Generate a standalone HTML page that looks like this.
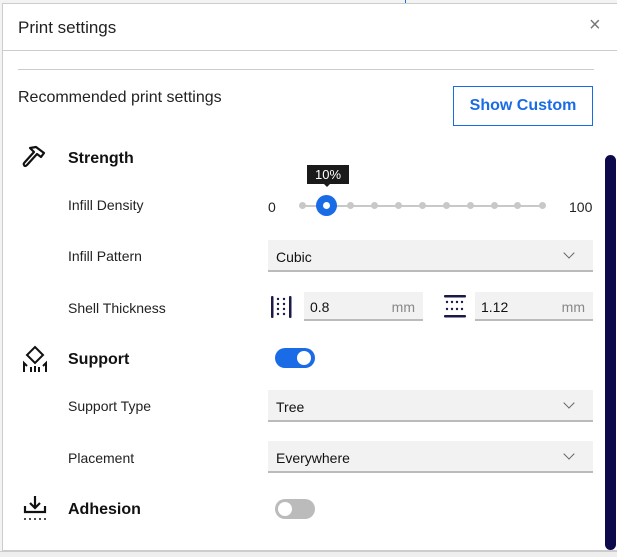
<!DOCTYPE html>
<html><head><meta charset="utf-8"><style>
*{box-sizing:border-box;margin:0;padding:0}
body{width:617px;height:557px;overflow:hidden;background:#fff;font-family:"Liberation Sans",sans-serif;color:#111;position:relative}
.a{position:absolute}
.lbl{font-size:14px;color:#222}
.h{font-size:16px;font-weight:bold}
.sel{background:#f2f2f2;border-bottom:2px solid #bbb;height:32px;font-size:14px;padding:9px 8px}
.chev{position:absolute;right:20px;top:9px;width:8px;height:8px;border-right:1.5px solid #666;border-bottom:1.5px solid #666;transform:rotate(45deg)}
.dot{position:absolute;width:7px;height:7px;border-radius:50%;background:#c8c8c8;top:202px}
</style></head><body>
<div class="a" style="left:0;top:0;width:617px;height:557px;background:#f3f3f3"></div>
<div class="a" style="left:2px;top:3px;width:620px;height:548px;background:#fff;border:1px solid #ccc"></div>
<div class="a" style="left:405px;top:0;width:1px;height:3px;background:#1a6be6"></div>
<div class="a" style="left:3px;top:50px;width:614px;height:1px;background:#ccc"></div>
<div class="a" style="left:18px;top:18px;font-size:17px;color:#222">Print settings</div>
<div class="a" style="left:589px;top:14px;font-size:20px;color:#777">×</div>
<div class="a" style="left:18px;top:69px;width:576px;height:1px;background:#ccc"></div>
<div class="a" style="left:18px;top:89px;font-size:16px;color:#222">Recommended print settings</div>
<div class="a" style="left:453px;top:86px;width:140px;height:40px;border:1.5px solid #1a6be6;color:#1a6be6;font-size:16px;font-weight:bold;text-align:center;line-height:38px">Show Custom</div>

<svg class="a" style="left:22px;top:145px" width="26" height="26" viewBox="0 0 26 26" fill="none" stroke="#111" stroke-width="2.2" stroke-linejoin="round"><path d="M8 3 L14 2 L22 8 L19 12 L15 9 L5 20 Q3 22 2 20 Q1 19 3 17 L12 7 Z"/></svg>
<div class="a h" style="left:68px;top:150px">Strength</div>
<div class="a lbl" style="left:68px;top:197px">Infill Density</div>
<div class="a lbl" style="left:268px;top:199px">0</div>
<div class="a lbl" style="left:569px;top:199px">100</div>
<div class="a" style="left:302px;top:205px;width:240px;height:2px;background:#c8c8c8"></div>
<div class="dot" style="left:299px"></div><div class="dot" style="left:347px"></div><div class="dot" style="left:371px"></div><div class="dot" style="left:395px"></div><div class="dot" style="left:419px"></div><div class="dot" style="left:443px"></div><div class="dot" style="left:467px"></div><div class="dot" style="left:491px"></div><div class="dot" style="left:514px"></div><div class="dot" style="left:539px"></div>
<div class="a" style="left:316px;top:195px;width:21px;height:21px;border-radius:50%;background:#1a6be6"></div>
<div class="a" style="left:323px;top:202px;width:7px;height:7px;border-radius:50%;background:#fff"></div>
<div class="a" style="left:307px;top:165px;width:42px;height:19px;background:#1a1a1a;color:#fff;font-size:13px;text-align:center;line-height:19px">10%</div>
<div class="a" style="left:324px;top:184px;width:0;height:0;border-left:3px solid transparent;border-right:3px solid transparent;border-top:3px solid #1a1a1a"></div>

<div class="a lbl" style="left:68px;top:248px">Infill Pattern</div>
<div class="a sel" style="left:268px;top:240px;width:325px">Cubic<span class="chev"></span></div>

<div class="a lbl" style="left:68px;top:300px">Shell Thickness</div>
<svg class="a" style="left:270px;top:296px" width="24" height="22" viewBox="0 0 24 22" fill="#1a1a4a"><rect x="1" y="0" width="2.5" height="22" rx="1"/><rect x="19" y="0" width="2.5" height="22" rx="1"/><circle cx="8" cy="3" r="1.2"/><circle cx="8" cy="8" r="1.2"/><circle cx="8" cy="13" r="1.2"/><circle cx="8" cy="18" r="1.2"/><circle cx="14" cy="3" r="1.2"/><circle cx="14" cy="8" r="1.2"/><circle cx="14" cy="13" r="1.2"/><circle cx="14" cy="18" r="1.2"/></svg>
<div class="a" style="left:304px;top:292px;width:119px;height:29px;background:#f2f2f2;border-bottom:2px solid #bbb;font-size:14px;padding:7px 6px">0.8<span style="position:absolute;right:8px;color:#888">mm</span></div>
<svg class="a" style="left:443px;top:295px" width="24" height="24" viewBox="0 0 24 24" fill="#1a1a4a"><rect x="1" y="0" width="22" height="2.5" rx="1"/><rect x="1" y="20" width="22" height="2.5" rx="1"/><circle cx="4" cy="7" r="1.2"/><circle cx="9" cy="7" r="1.2"/><circle cx="14" cy="7" r="1.2"/><circle cx="19" cy="7" r="1.2"/><circle cx="4" cy="14" r="1.2"/><circle cx="9" cy="14" r="1.2"/><circle cx="14" cy="14" r="1.2"/><circle cx="19" cy="14" r="1.2"/></svg>
<div class="a" style="left:475px;top:292px;width:118px;height:29px;background:#f2f2f2;border-bottom:2px solid #bbb;font-size:14px;padding:7px 6px">1.12<span style="position:absolute;right:8px;color:#888">mm</span></div>

<svg class="a" style="left:22px;top:345px" width="26" height="28" viewBox="0 0 26 28" fill="none" stroke="#111" stroke-width="2"><path d="M13 2 L21 10 L13 18 L5 10 Z"/><path d="M2 27 V18 L5 21 M24 27 V18 L21 21"/><path d="M9 27 V22 M13 27 V21 M17 27 V22" /></svg>
<div class="a h" style="left:68px;top:351px">Support</div>
<div class="a" style="left:275px;top:348px;width:40px;height:20px;border-radius:10px;background:#1a6be6"></div>
<div class="a" style="left:297px;top:351px;width:14px;height:14px;border-radius:50%;background:#fff"></div>

<div class="a lbl" style="left:68px;top:398px">Support Type</div>
<div class="a sel" style="left:268px;top:390px;width:325px">Tree<span class="chev"></span></div>
<div class="a lbl" style="left:68px;top:450px">Placement</div>
<div class="a sel" style="left:268px;top:441px;width:325px">Everywhere<span class="chev"></span></div>

<svg class="a" style="left:22px;top:494px" width="26" height="28" viewBox="0 0 26 28" fill="none" stroke="#111" stroke-width="2.2"><path d="M13 2 V14 M8 9 L13 14 L18 9"/><path d="M3 12 V18 H23 V12"/><g fill="#111" stroke="none"><circle cx="3" cy="25" r="1"/><circle cx="8" cy="25" r="1"/><circle cx="13" cy="25" r="1"/><circle cx="18" cy="25" r="1"/><circle cx="23" cy="25" r="1"/></g></svg>
<div class="a h" style="left:68px;top:501px">Adhesion</div>
<div class="a" style="left:275px;top:499px;width:40px;height:20px;border-radius:10px;background:#bbb"></div>
<div class="a" style="left:278px;top:502px;width:14px;height:14px;border-radius:50%;background:#fff"></div>

<div class="a" style="left:605px;top:155px;width:11px;height:395px;border-radius:6px;background:#0c0a4a"></div>
<div class="a" style="left:0;top:551px;width:617px;height:6px;background:#eee;border-top:1px solid #ccc"></div>
</body></html>
